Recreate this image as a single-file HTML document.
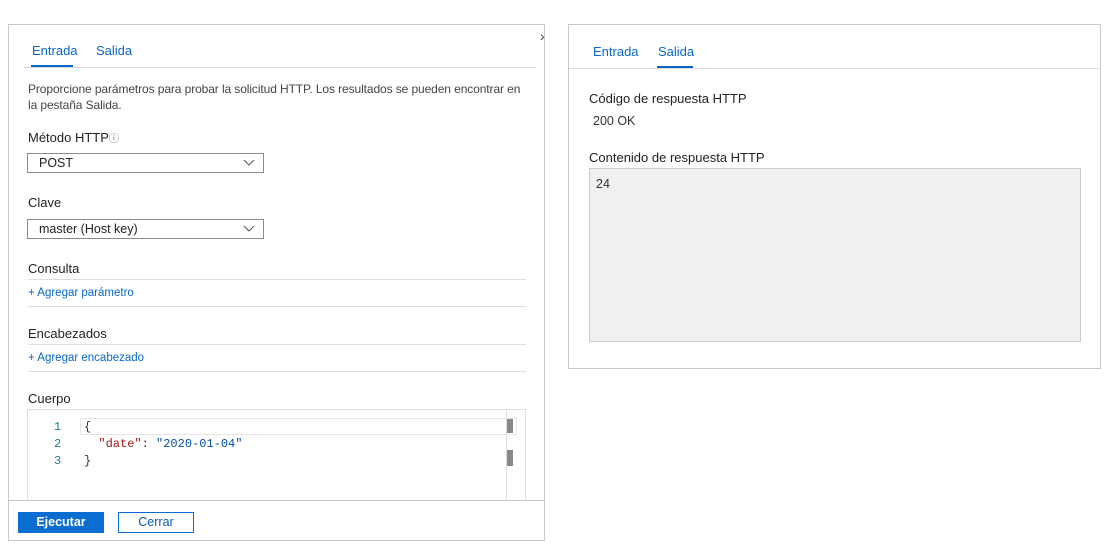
<!DOCTYPE html>
<html><head><meta charset="utf-8"><style>
body{margin:0;width:1119px;height:559px;background:#fff;font-family:"Liberation Sans",sans-serif;color:#222;position:relative;overflow:hidden}
.a{position:absolute;white-space:nowrap}
.f{font-size:12.5px}
.lbl{font-size:13px;color:#222}
.blue{color:#0a67c9}
.hr{position:absolute;height:1px;background:#ddd}
.sel{position:absolute;border:1px solid #8a8a8a;height:18px;background:#fff}
.sel span{position:absolute;left:11px;top:2px;font-size:12.5px}
.sel svg{position:absolute;right:8px;top:5px}
.mono{font-family:"Liberation Mono",monospace;font-size:12px}
</style></head><body>
<div class="a" style="left:8px;top:24px;width:535px;height:515px;border:1px solid #c8c8c8;"></div>
<div class="a" style="left:540px;top:28px;font-size:14px;color:#444">›</div>
<div class="a lbl blue" style="left:32px;top:43px">Entrada</div>
<div class="a" style="left:31px;top:65px;width:42px;height:2px;background:#0a67c9"></div>
<div class="a lbl blue" style="left:96px;top:43px">Salida</div>
<div class="hr" style="left:24px;top:67px;width:512px"></div>
<div class="a" style="left:28px;top:81px;color:#444;line-height:16px;font-size:12px;letter-spacing:-0.1px">Proporcione parámetros para probar la solicitud HTTP. Los resultados se pueden encontrar en<br>la pestaña Salida.</div>
<div class="a lbl" style="left:28px;top:130px">Método HTTP<span style="font-size:10px;color:#666;vertical-align:top">ⓘ</span></div>
<div class="sel" style="left:27px;top:153px;width:235px"><span>POST</span><svg width="12" height="8"><path d="M1 1l5 5 5-5" fill="none" stroke="#555"/></svg></div>
<div class="a lbl" style="left:28px;top:195px">Clave</div>
<div class="sel" style="left:27px;top:219px;width:235px"><span>master (Host key)</span><svg width="12" height="8"><path d="M1 1l5 5 5-5" fill="none" stroke="#555"/></svg></div>
<div class="a lbl" style="left:28px;top:261px">Consulta</div>
<div class="hr" style="left:28px;top:279px;width:498px"></div>
<div class="a blue" style="left:28px;top:287px;font-size:11.5px">+ Agregar parámetro</div>
<div class="hr" style="left:28px;top:306px;width:498px"></div>
<div class="a lbl" style="left:28px;top:326px">Encabezados</div>
<div class="hr" style="left:28px;top:344px;width:498px"></div>
<div class="a blue" style="left:28px;top:352px;font-size:11.5px">+ Agregar encabezado</div>
<div class="hr" style="left:28px;top:371px;width:498px"></div>
<div class="a lbl" style="left:28px;top:391px">Cuerpo</div>
<div class="a" style="left:27px;top:409px;width:497px;height:91px;border:1px solid #e0e0e0;border-bottom:none"></div>
<div class="a" style="left:80px;top:418px;width:435px;height:15px;border:1px solid #e6e6e6"></div>
<div class="a" style="left:506px;top:410px;width:1px;height:90px;background:#ddd"></div>
<div class="a" style="left:507px;top:419px;width:6px;height:14px;background:#888"></div>
<div class="a" style="left:507px;top:450px;width:6px;height:16px;background:#888"></div>
<div class="a mono" style="left:54px;top:419px;color:#237893;line-height:17px">1<br>2<br>3</div>
<div class="a mono" style="left:84px;top:419px;line-height:17px;color:#333">{<br>&nbsp;&nbsp;<span style="color:#a31515">"date"</span>: <span style="color:#0451a5">"2020-01-04"</span><br>}</div>
<div class="hr" style="left:9px;top:500px;width:535px;background:#c8c8c8"></div>
<div class="a" style="left:18px;top:512px;width:86px;height:21px;background:#0a6ed1;color:#fff;font-size:12.5px;text-align:center;line-height:21px;font-weight:bold">Ejecutar</div>
<div class="a" style="left:118px;top:512px;width:74px;height:19px;border:1px solid #0a6ed1;color:#0a5bb0;font-size:12.5px;text-align:center;line-height:19px">Cerrar</div>
<div class="a" style="left:568px;top:24px;width:531px;height:343px;border:1px solid #c8c8c8"></div>
<div class="a lbl blue" style="left:593px;top:44px">Entrada</div>
<div class="a lbl blue" style="left:658px;top:44px">Salida</div>
<div class="a" style="left:657px;top:66px;width:36px;height:2px;background:#0a67c9"></div>
<div class="hr" style="left:569px;top:68px;width:530px"></div>
<div class="a lbl" style="left:589px;top:91px">Código de respuesta HTTP</div>
<div class="a f" style="left:593px;top:114px;color:#333">200 OK</div>
<div class="a lbl" style="left:589px;top:150px">Contenido de respuesta HTTP</div>
<div class="a" style="left:589px;top:168px;width:490px;height:172px;background:#f0f0f0;border:1px solid #ccc"></div>
<div class="a f" style="left:596px;top:177px;color:#333">24</div>
</body></html>
